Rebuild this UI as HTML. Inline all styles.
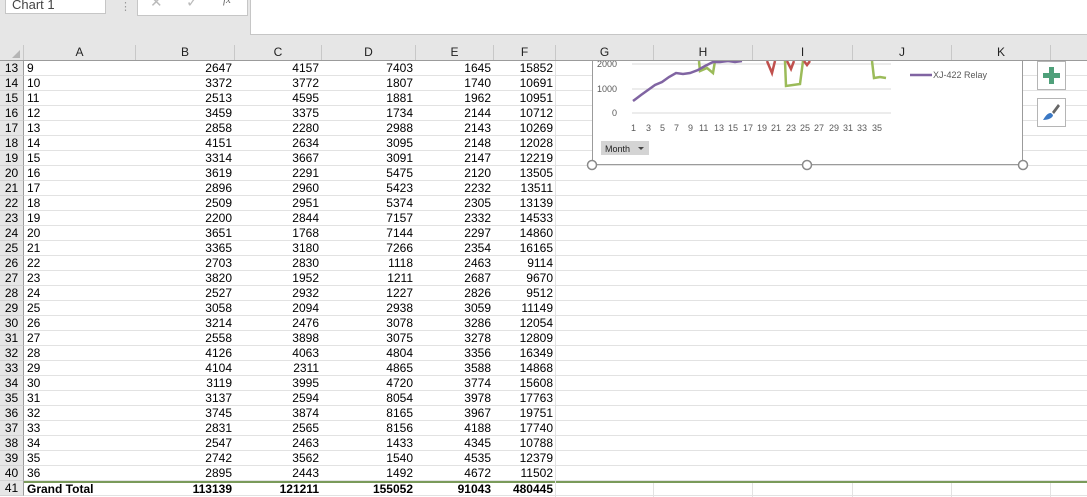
<!DOCTYPE html>
<html><head><meta charset="utf-8"><style>
body{margin:0;width:1087px;height:497px;overflow:hidden;background:#fff;font-family:"Liberation Sans",Arial,sans-serif;position:relative}
.top{position:absolute;left:0;top:0;width:1087px;height:45px;background:#e6e6e6}
.nb{position:absolute;left:5px;top:-6px;width:101px;height:20px;background:#fff;border:1px solid #c6c6c6;font-size:13px;color:#444;padding-left:6px;box-sizing:border-box;line-height:20px}
.fb{position:absolute;left:137px;top:-6px;width:109px;height:20px;background:#fff;border:1px solid #c6c6c6}
.fx{position:absolute;left:250px;top:0;width:837px;height:34px;background:#fff;border-left:1px solid #c6c6c6;border-bottom:1px solid #c6c6c6}
.hdr{position:absolute;top:45px;left:0;height:16px;width:1087px;background:#e6e6e6;border-bottom:1px solid #9b9b9b;box-sizing:border-box}
.hc{position:absolute;top:0;height:15px;font-size:12px;text-align:center;line-height:15px;border-right:1px solid #c8c8c8;box-sizing:border-box;color:#222}
.rn{position:absolute;left:0;width:24px;background:#e6e6e6;border-right:1px solid #9b9b9b;font-size:12px;text-align:center;height:15px;line-height:15px;border-bottom:1px solid #d4d4d4;box-sizing:border-box}
.row{position:absolute;left:24px;height:15px;width:1063px;border-bottom:1px solid #e2e2e2;box-sizing:border-box;font-size:12px;line-height:14px}
.c{position:absolute;top:0;height:15px;text-align:right;padding-right:3px;box-sizing:border-box}
.gl{position:absolute;top:61px;bottom:0;width:1px;background:#e2e2e2}
</style></head><body>
<div class="top"></div>
<div class="nb">Chart 1</div>
<div style="position:absolute;left:120px;top:0;font-size:11px;color:#999">⋮</div>
<div class="fb"><span style="position:absolute;left:12px;top:-2px;color:#bbb;font-size:15px">✕</span><span style="position:absolute;left:48px;top:-2px;color:#bbb;font-size:15px">✓</span><span style="position:absolute;left:85px;top:-1px;color:#666;font-size:11px;font-style:italic;font-family:'Liberation Serif',serif">fx</span></div>
<div class="fx"></div>
<div class="hdr">
<div class="hc" style="left:0;width:24px"><span style="position:absolute;right:3px;bottom:2px;width:0;height:0;border-left:8px solid transparent;border-bottom:8px solid #b5b5b5"></span></div>
<div class="hc" style="left:24px;width:112px">A</div>
<div class="hc" style="left:136px;width:99px">B</div>
<div class="hc" style="left:235px;width:87px">C</div>
<div class="hc" style="left:322px;width:94px">D</div>
<div class="hc" style="left:416px;width:78px">E</div>
<div class="hc" style="left:494px;width:62px">F</div>
<div class="hc" style="left:556px;width:98px">G</div>
<div class="hc" style="left:654px;width:99px">H</div>
<div class="hc" style="left:753px;width:100px">I</div>
<div class="hc" style="left:853px;width:99px">J</div>
<div class="hc" style="left:952px;width:99px">K</div>
</div>
<div class="gl" style="left:555px"></div><div class="gl" style="left:653px"></div><div class="gl" style="left:752px"></div><div class="gl" style="left:852px"></div><div class="gl" style="left:951px"></div><div class="gl" style="left:1050px"></div>
<div id="rows"></div>
<script>
var d=[[9,2647,4157,7403,1645,15852],[10,3372,3772,1807,1740,10691],[11,2513,4595,1881,1962,10951],[12,3459,3375,1734,2144,10712],[13,2858,2280,2988,2143,10269],[14,4151,2634,3095,2148,12028],[15,3314,3667,3091,2147,12219],[16,3619,2291,5475,2120,13505],[17,2896,2960,5423,2232,13511],[18,2509,2951,5374,2305,13139],[19,2200,2844,7157,2332,14533],[20,3651,1768,7144,2297,14860],[21,3365,3180,7266,2354,16165],[22,2703,2830,1118,2463,9114],[23,3820,1952,1211,2687,9670],[24,2527,2932,1227,2826,9512],[25,3058,2094,2938,3059,11149],[26,3214,2476,3078,3286,12054],[27,2558,3898,3075,3278,12809],[28,4126,4063,4804,3356,16349],[29,4104,2311,4865,3588,14868],[30,3119,3995,4720,3774,15608],[31,3137,2594,8054,3978,17763],[32,3745,3874,8165,3967,19751],[33,2831,2565,8156,4188,17740],[34,2547,2463,1433,4345,10788],[35,2742,3562,1540,4535,12379],[36,2895,2443,1492,4672,11502],["Grand Total",113139,121211,155052,91043,480445]];
var L=[24,136,235,322,416,494,556],h='';
d.forEach(function(r,i){var y=61+i*15,last=i==28,pt=last?'padding-top:2px;':'';
h+='<div class="rn" style="top:'+y+'px">'+(13+i)+'</div><div class="row" style="top:'+y+'px;'+(last?'font-weight:bold;box-shadow:inset 0 2px 0 #7a9a5a;line-height:13px;':'background:#fff;')+'">';
h+='<div class="c" style="left:3px;text-align:left;'+pt+'">'+r[0]+'</div>';
for(var k=1;k<6;k++)h+='<div class="c" style="left:'+(L[k]-24)+'px;width:'+(L[k+1]-L[k])+'px;'+pt+'">'+r[k]+'</div>';
h+='<div style="position:absolute;left:531px;top:0;height:15px;width:1px;background:#e2e2e2"></div></div>';});
document.getElementById('rows').innerHTML=h;
</script>
<div style="position:absolute;left:592px;top:61px;width:431px;height:104px;background:#fff;border:1px solid #9b9b9b;border-top:none;box-sizing:border-box"></div>
<svg style="position:absolute;left:580px;top:61px" width="460" height="115">
<g font-size="9" fill="#595959" font-family="Liberation Sans">
<text x="37" y="6" text-anchor="end">2000</text><text x="37" y="31" text-anchor="end">1000</text><text x="37" y="55" text-anchor="end">0</text>
</g>
<g stroke="#d9d9d9"><line x1="52" x2="311" y1="3" y2="3"/><line x1="52" x2="311" y1="28" y2="28"/><line x1="52" x2="311" y1="52" y2="52"/></g>
<g font-size="9" fill="#595959">
<text x="51" y="70">1</text><text x="66" y="70">3</text><text x="80" y="70">5</text><text x="94" y="70">7</text><text x="108" y="70">9</text><text x="119" y="70">11</text><text x="134" y="70">13</text><text x="148" y="70">15</text><text x="163" y="70">17</text><text x="177" y="70">19</text><text x="191" y="70">21</text><text x="206" y="70">23</text><text x="220" y="70">25</text><text x="234" y="70">27</text><text x="249" y="70">29</text><text x="263" y="70">31</text><text x="277" y="70">33</text><text x="292" y="70">35</text>
</g>
<polyline fill="none" stroke="#9bbb59" stroke-width="2.5" points="119,0 120,10 127,7 133,12 135,0"/>
<polyline fill="none" stroke="#9bbb59" stroke-width="2.5" points="205,0 206,25 220,23 223,0"/>
<polyline fill="none" stroke="#9bbb59" stroke-width="2.5" points="292,0 294,17 300,16 306,17"/>
<polyline fill="none" stroke="#c0504d" stroke-width="2.5" points="187,0 192,12 195,0"/>
<polyline fill="none" stroke="#c0504d" stroke-width="2.5" points="207,0 211,8 214,0"/>
<polyline fill="none" stroke="#c0504d" stroke-width="2.5" points="224,0 227,4 230,0"/>
<polyline fill="none" stroke="#8064a2" stroke-width="2.5" points="53,40 61,34 68,29 75,24 82,21 89,16 96,12 103,13 110,12 118,9 125,5 133,1 140,1 148,0 155,1 162,0"/>
<line x1="330" x2="352" y1="14" y2="14" stroke="#8064a2" stroke-width="2.5"/>
<text x="353" y="17" font-size="9" fill="#595959">XJ-422 Relay</text>
<rect x="21" y="80" width="48" height="14" fill="#d4d4d4"/><text x="25" y="91" font-size="9" fill="#222">Month</text><path d="M58,86 l6,0 l-3,3z" fill="#444"/>
<g fill="#fff" stroke="#8a8a8a" stroke-width="1.5"><circle cx="12" cy="104" r="4.5"/><circle cx="227" cy="104" r="4.5"/><circle cx="443" cy="104" r="4.5"/></g>
</svg>
<div style="position:absolute;left:1037px;top:61px;width:27px;height:27px;background:#fff;border:1px solid #b5b5b5"><div style="position:absolute;left:11px;top:5px;width:5px;height:17px;background:#4fa07a"></div><div style="position:absolute;left:5px;top:11px;width:17px;height:5px;background:#4fa07a"></div></div>
<div style="position:absolute;left:1037px;top:98px;width:27px;height:27px;background:#fff;border:1px solid #b5b5b5"><svg width="27" height="27"><path d="M20,5 L14,13 L16,15 L22,7Z" fill="#666"/><path d="M13,14 C9,14 7,18 5,21 C10,21 15,19 15,16Z" fill="#3a78c4"/></svg></div>
</body></html>
